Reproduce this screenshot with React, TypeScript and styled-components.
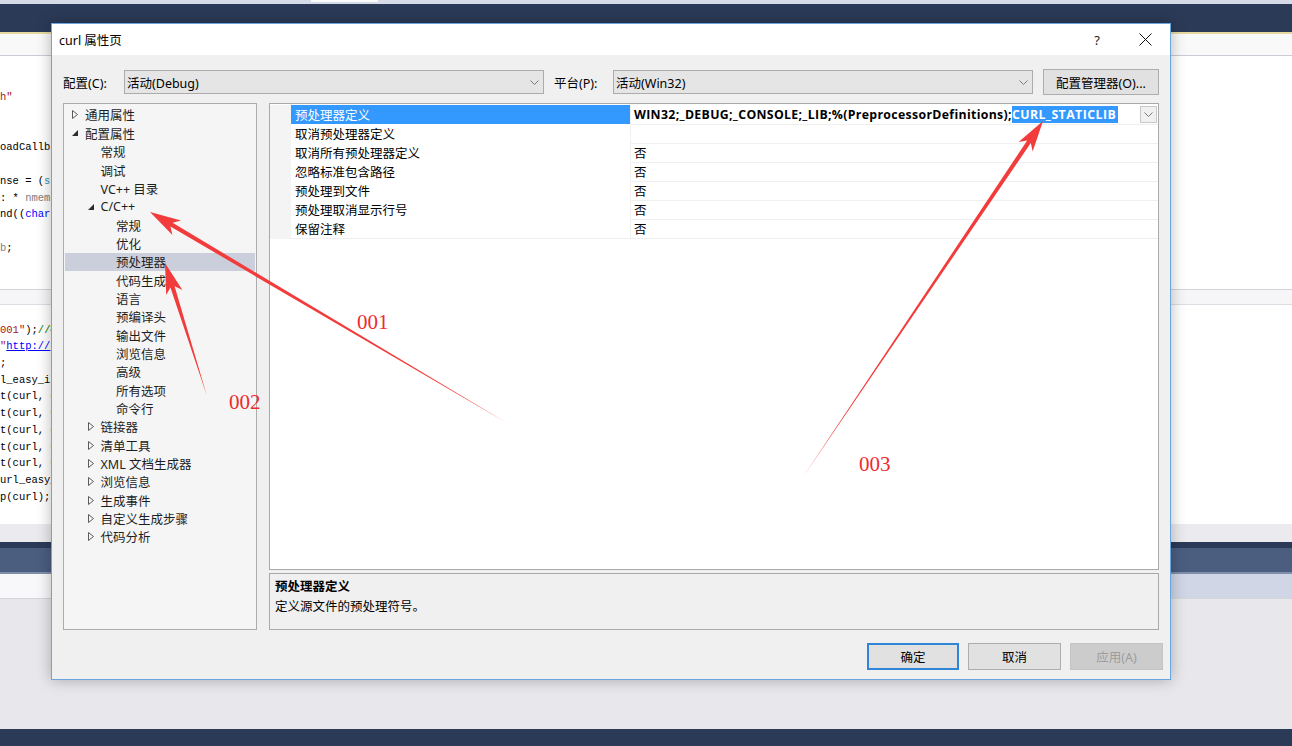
import React from 'react';
import styled, { createGlobalStyle } from 'styled-components';

const Global = createGlobalStyle`
  html, body { margin: 0; padding: 0; }
  body {
    width: 1292px; height: 746px; overflow: hidden;
    background: #e8e8ec;
    font-family: "Noto Sans CJK SC", "Noto Sans", sans-serif;
  }
`;

const UI = `"Noto Sans", "Noto Sans CJK SC", sans-serif`;

const Screen = styled.div`
  position: relative;
  width: 1292px;
  height: 746px;
  overflow: hidden;
  display: flex;
  flex-direction: column;
  background: #e8e8ec;
`;

const TopStrip = styled.div`
  height: 4px;
  background: #d6dbe8;
  display: flex;
  padding-left: 311px;
`;
const TopTab = styled.div`
  width: 67px;
  height: 2px;
  background: #fbfbfb;
`;
const NavyBar = styled.div<{ $h: number }>`
  height: ${(p) => p.$h}px;
  background: #2b3a57;
  flex-shrink: 0;
`;
const YellowLine = styled.div`
  height: 2px;
  background: #e6d9a0;
`;
const TabStrip = styled.div`
  height: 21px;
  background: #f9f9fa;
  border-bottom: 1px solid #c9ccd5;
`;
const Editor = styled.div<{ $h: number }>`
  height: ${(p) => p.$h}px;
  background: #ffffff;
  overflow: hidden;
  font-family: "Liberation Mono", monospace;
  font-size: 10.5px;
  color: #000;
`;
const CodeLine = styled.div`
  height: 16.7px;
  line-height: 16.7px;
  white-space: pre;
`;
const Str = styled.span` color: #a31515; `;
const Kw = styled.span` color: #0000ff; `;
const Ty = styled.span` color: #2b91af; `;
const Par = styled.span` color: #808080; `;
const Cmt = styled.span` color: #008000; `;
const Link = styled.span` color: #0000ff; text-decoration: underline; `;

const Splitter = styled.div`
  height: 14px;
  background: #f6f6f8;
  border-top: 1px solid #d3d4da;
  border-bottom: 1px solid #dcdde2;
`;
const GrayStrip = styled.div`
  height: 18px;
  background: #ebebef;
`;
const BlueBar = styled.div`
  height: 24px;
  background: #4b5e80;
  border-bottom: 2px solid #7f8faa;
`;
const ListRow = styled.div`
  height: 24px;
  display: flex;
  border-bottom: 1px solid #d4d5db;
`;
const ListLeft = styled.div`
  width: 60px;
  background: #f8f8fa;
`;
const ListRest = styled.div`
  flex: 1;
  background: #d0d6e6;
`;
const Filler = styled.div`
  flex: 1;
  background: #e8e8ec;
`;

/* ---------------- Dialog ---------------- */

const Dialog = styled.div`
  position: absolute;
  left: 51px;
  top: 23px;
  width: 1120px;
  height: 657px;
  box-sizing: border-box;
  border: 1px solid #6aa5dd;
  background: #f0f0f0;
  box-shadow: 0 0 14px rgba(0, 0, 0, 0.28);
  display: flex;
  flex-direction: column;
  font-family: "Noto Sans CJK SC", "Noto Sans", sans-serif;
  font-size: 12.5px;
  color: #000;
`;
const TitleBar = styled.div`
  height: 31px;
  background: #ffffff;
  display: flex;
  align-items: center;
  padding-left: 7px;
  padding-right: 1px;
`;
const TitleText = styled.div`
  flex: 1;
  font-size: 12.5px;
  font-family: ${UI};
`;
const TitleBtn = styled.div`
  width: 48px;
  height: 31px;
  display: flex;
  align-items: center;
  justify-content: center;
  font-family: ${UI};
  font-size: 13px;
  color: #222;
`;
const Body = styled.div`
  flex: 1;
  display: flex;
  flex-direction: column;
  padding: 14px 11px 9px 11px;
`;
const ConfigRow = styled.div`
  height: 26px;
  display: flex;
  align-items: center;
`;
const Label = styled.div<{ $w: number }>`
  width: ${(p) => p.$w}px;
  flex-shrink: 0;
  font-family: ${UI};
`;
const Combo = styled.div`
  flex: 1;
  height: 24px;
  box-sizing: border-box;
  border: 1px solid #acacac;
  background: #e5e5e5;
  display: flex;
  align-items: center;
  padding-left: 2px;
  padding-right: 4px;
  font-family: ${UI};
`;
const ComboText = styled.div`
  flex: 1;
`;
const Gap = styled.div<{ $w: number }>`
  width: ${(p) => p.$w}px;
  flex-shrink: 0;
`;
const Button = styled.div<{ $w: number; $kind?: 'default' | 'plain' | 'disabled' }>`
  width: ${(p) => p.$w}px;
  height: ${(p) => (p.$kind ? 27 : 26)}px;
  box-sizing: border-box;
  display: flex;
  align-items: center;
  justify-content: center;
  flex-shrink: 0;
  font-family: ${UI};
  background: ${(p) => (p.$kind === 'disabled' ? '#cccccc' : '#e1e1e1')};
  color: ${(p) => (p.$kind === 'disabled' ? '#9d9d9d' : '#000')};
  border: ${(p) =>
    p.$kind === 'default'
      ? '2px solid #2f86d8'
      : p.$kind === 'disabled'
      ? '1px solid #c4c4c4'
      : '1px solid #adadad'};
`;

const Main = styled.div`
  margin-top: 8px;
  height: 527px;
  display: flex;
  gap: 12px;
`;
const Tree = styled.div`
  width: 194px;
  box-sizing: border-box;
  border: 1px solid #acacac;
  background: #f5f5f5;
  padding: 1.8px 1px 0 1px;
  display: flex;
  flex-direction: column;
`;
const TreeRow = styled.div<{ $level: number; $sel?: boolean }>`
  height: 18.35px;
  flex-shrink: 0;
  display: flex;
  align-items: center;
  padding-left: ${(p) => 7 + p.$level * 15.5}px;
  background: ${(p) => (p.$sel ? '#cbcfdc' : 'transparent')};
  color: #1e1e1e;
  white-space: nowrap;
`;
const Expander = styled.div`
  width: 13px;
  height: 18px;
  display: flex;
  align-items: center;
  flex-shrink: 0;
`;
const TreeText = styled.span`
  font-family: ${UI};
`;

const RightCol = styled.div`
  flex: 1;
  display: flex;
  flex-direction: column;
  gap: 3px;
`;
const Grid = styled.div`
  height: 467px;
  box-sizing: border-box;
  border: 1px solid #a9a9a9;
  background: #ffffff;
  padding-top: 1px;
  display: flex;
  flex-direction: column;
`;
const PropRow = styled.div`
  height: 19px;
  display: grid;
  grid-template-columns: 21px 340px 1fr;
`;
const Gutter = styled.div`
  background: #f4f4f4;
`;
const NameCell = styled.div<{ $sel?: boolean }>`
  display: flex;
  align-items: center;
  padding-left: 4px;
  box-sizing: border-box;
  background: ${(p) => (p.$sel ? '#3399ff' : '#fff')};
  color: ${(p) => (p.$sel ? '#fff' : '#000')};
  border-bottom: 1px solid ${(p) => (p.$sel ? '#3399ff' : '#efefef')};
  border-right: 1px solid #efefef;
  font-family: ${UI};
  white-space: nowrap;
`;
const ValueCell = styled.div`
  display: flex;
  align-items: center;
  padding-left: 3px;
  box-sizing: border-box;
  border-bottom: 1px solid #efefef;
  font-family: ${UI};
  white-space: nowrap;
`;
const BoldValue = styled.span`
  font-weight: 700;
  font-family: "Open Sans", "Noto Sans", sans-serif;
  font-size: 12.3px;
  letter-spacing: 0.33px;
`;
const Selection = styled.span`
  background: #3399ff;
  color: #fff;
  padding-right: 2px;
  letter-spacing: 0.45px;
`;
const DropBtn = styled.div`
  margin-left: auto;
  margin-right: 1px;
  width: 17px;
  height: 17px;
  box-sizing: border-box;
  border: 1px solid #c9c9c9;
  background: #f0f0f0;
  display: flex;
  align-items: center;
  justify-content: center;
`;
const Desc = styled.div`
  flex: 1;
  box-sizing: border-box;
  border: 1px solid #a9a9a9;
  background: #f0f0f0;
  padding: 2px 5px;
  display: flex;
  flex-direction: column;
  gap: 1px;
`;
const DescTitle = styled.div`
  font-weight: 700;
  line-height: 19px;
`;
const DescText = styled.div`
  line-height: 19px;
`;
const ButtonRow = styled.div`
  margin-top: 13px;
  margin-right: -4px;
  display: flex;
  justify-content: flex-end;
  gap: 9px;
`;

/* ---------------- Annotations ---------------- */

const Overlay = styled.svg`
  position: absolute;
  left: 0;
  top: 0;
  pointer-events: none;
`;
const Note = styled.span<{ $x: number; $y: number }>`
  position: absolute;
  left: ${(p) => p.$x}px;
  top: ${(p) => p.$y}px;
  font-family: "Liberation Serif", serif;
  font-size: 21px;
  color: #ee2b2b;
  line-height: 1;
`;

function arrowPoints(tx: number, ty: number, hx: number, hy: number) {
  const dx = hx - tx;
  const dy = hy - ty;
  const len = Math.hypot(dx, dy);
  const ux = dx / len;
  const uy = dy / len;
  const px = -uy;
  const py = ux;
  const headLen = 31;
  const headW = 8.5;
  const shaftW = 2.2;
  const bx = hx - ux * headLen;
  const by = hy - uy * headLen;
  const nx = hx - ux * (headLen - 6);
  const ny = hy - uy * (headLen - 6);
  const pts = [
    [tx, ty],
    [nx + px * shaftW, ny + py * shaftW],
    [bx + px * headW, by + py * headW],
    [hx, hy],
    [bx - px * headW, by - py * headW],
    [nx - px * shaftW, ny - py * shaftW],
  ];
  return pts.map((p) => `${p[0].toFixed(1)},${p[1].toFixed(1)}`).join(' ');
}

const Chevron = () => (
  <svg width="9" height="5" viewBox="0 0 9 5">
    <polyline points="0.5,0.5 4.5,4.5 8.5,0.5" fill="none" stroke="#7a7a7a" strokeWidth="1" />
  </svg>
);

const ClosedTri = () => (
  <svg width="6" height="9" viewBox="0 0 6 9">
    <polygon points="0.5,0.5 5.5,4.5 0.5,8.5" fill="none" stroke="#5a5a5a" strokeWidth="1" />
  </svg>
);
const OpenTri = () => (
  <svg width="6" height="6" viewBox="0 0 6 6">
    <polygon points="6,0 6,6 0,6" fill="#2c2c2c" />
  </svg>
);

type TreeItem = { label: string; level: number; exp?: 'open' | 'closed'; sel?: boolean };
const treeItems: TreeItem[] = [
  { label: '通用属性', level: 0, exp: 'closed' },
  { label: '配置属性', level: 0, exp: 'open' },
  { label: '常规', level: 1 },
  { label: '调试', level: 1 },
  { label: 'VC++ 目录', level: 1 },
  { label: 'C/C++', level: 1, exp: 'open' },
  { label: '常规', level: 2 },
  { label: '优化', level: 2 },
  { label: '预处理器', level: 2, sel: true },
  { label: '代码生成', level: 2 },
  { label: '语言', level: 2 },
  { label: '预编译头', level: 2 },
  { label: '输出文件', level: 2 },
  { label: '浏览信息', level: 2 },
  { label: '高级', level: 2 },
  { label: '所有选项', level: 2 },
  { label: '命令行', level: 2 },
  { label: '链接器', level: 1, exp: 'closed' },
  { label: '清单工具', level: 1, exp: 'closed' },
  { label: 'XML 文档生成器', level: 1, exp: 'closed' },
  { label: '浏览信息', level: 1, exp: 'closed' },
  { label: '生成事件', level: 1, exp: 'closed' },
  { label: '自定义生成步骤', level: 1, exp: 'closed' },
  { label: '代码分析', level: 1, exp: 'closed' },
];

const props = [
  { name: '取消预处理器定义', value: '' },
  { name: '取消所有预处理器定义', value: '否' },
  { name: '忽略标准包含路径', value: '否' },
  { name: '预处理到文件', value: '否' },
  { name: '预处理取消显示行号', value: '否' },
  { name: '保留注释', value: '否' },
];

export default function App() {
  return (
    <>
      <Global />
      <Screen>
        <TopStrip>
          <TopTab />
        </TopStrip>
        <NavyBar $h={28} />
        <YellowLine />
        <TabStrip />
        <Editor $h={233}>
          <CodeLine />
          <CodeLine />
          <CodeLine>
            <Str>h"</Str>
          </CodeLine>
          <CodeLine />
          <CodeLine />
          <CodeLine>oadCallback(</CodeLine>
          <CodeLine />
          <CodeLine>
            nse = (<Ty>struct</Ty>
          </CodeLine>
          <CodeLine>
            : * <Par>nmemb</Par>;
          </CodeLine>
          <CodeLine>
            nd((<Kw>char</Kw>*)
          </CodeLine>
          <CodeLine />
          <CodeLine>
            <Par>b</Par>;
          </CodeLine>
        </Editor>
        <Splitter />
        <Editor $h={219}>
          <CodeLine />
          <CodeLine>
            <Str>001"</Str>);<Cmt>//初始化</Cmt>
          </CodeLine>
          <CodeLine>
            <Str>"</Str>
            <Link>http://</Link>
          </CodeLine>
          <CodeLine>;</CodeLine>
          <CodeLine>l_easy_init();</CodeLine>
          <CodeLine>t(curl, CURL</CodeLine>
          <CodeLine>t(curl, CURL</CodeLine>
          <CodeLine>t(curl, CURL</CodeLine>
          <CodeLine>t(curl, CURL</CodeLine>
          <CodeLine>t(curl, CURL</CodeLine>
          <CodeLine>url_easy_perform</CodeLine>
          <CodeLine>p(curl);</CodeLine>
        </Editor>
        <GrayStrip />
        <NavyBar $h={6} />
        <BlueBar />
        <ListRow>
          <ListLeft />
          <ListRest />
        </ListRow>
        <Filler />
        <NavyBar $h={17} />

        <Dialog>
          <TitleBar>
            <TitleText>curl 属性页</TitleText>
            <TitleBtn>?</TitleBtn>
            <TitleBtn>
              <svg width="13" height="13" viewBox="0 0 13 13">
                <line x1="0.5" y1="0.5" x2="12.5" y2="12.5" stroke="#111" strokeWidth="1" />
                <line x1="12.5" y1="0.5" x2="0.5" y2="12.5" stroke="#111" strokeWidth="1" />
              </svg>
            </TitleBtn>
          </TitleBar>
          <Body>
            <ConfigRow>
              <Label $w={61}>配置(C):</Label>
              <Combo>
                <ComboText>活动(Debug)</ComboText>
                <Chevron />
              </Combo>
              <Gap $w={10} />
              <Label $w={59}>平台(P):</Label>
              <Combo>
                <ComboText>活动(Win32)</ComboText>
                <Chevron />
              </Combo>
              <Gap $w={10} />
              <Button $w={116}>配置管理器(O)...</Button>
            </ConfigRow>
            <Main>
              <Tree>
                {treeItems.map((t, i) => (
                  <TreeRow key={i} $level={t.level} $sel={t.sel}>
                    <Expander>
                      {t.exp === 'closed' && <ClosedTri />}
                      {t.exp === 'open' && <OpenTri />}
                    </Expander>
                    <TreeText>{t.label}</TreeText>
                  </TreeRow>
                ))}
              </Tree>
              <RightCol>
                <Grid>
                  <PropRow>
                    <Gutter />
                    <NameCell $sel>预处理器定义</NameCell>
                    <ValueCell>
                      <BoldValue>
                        WIN32;_DEBUG;_CONSOLE;_LIB;%(PreprocessorDefinitions);
                        <Selection>CURL_STATICLIB</Selection>
                      </BoldValue>
                      <DropBtn>
                        <Chevron />
                      </DropBtn>
                    </ValueCell>
                  </PropRow>
                  {props.map((p, i) => (
                    <PropRow key={i}>
                      <Gutter />
                      <NameCell>{p.name}</NameCell>
                      <ValueCell>{p.value}</ValueCell>
                    </PropRow>
                  ))}
                </Grid>
                <Desc>
                  <DescTitle>预处理器定义</DescTitle>
                  <DescText>定义源文件的预处理符号。</DescText>
                </Desc>
              </RightCol>
            </Main>
            <ButtonRow>
              <Button $w={92} $kind="default">确定</Button>
              <Button $w={93} $kind="plain">取消</Button>
              <Button $w={93} $kind="disabled">应用(A)</Button>
            </ButtonRow>
          </Body>
        </Dialog>

        <Overlay width="1292" height="746" viewBox="0 0 1292 746">
          <polygon points={arrowPoints(507, 423, 150, 212)} fill="#f23c3c" />
          <polygon points={arrowPoints(207, 396, 165, 263)} fill="#f23c3c" />
          <polygon points={arrowPoints(803, 477, 1043, 121)} fill="#f23c3c" />
        </Overlay>
        <Note $x={357} $y={312}>001</Note>
        <Note $x={229} $y={392}>002</Note>
        <Note $x={859} $y={454}>003</Note>
      </Screen>
    </>
  );
}
